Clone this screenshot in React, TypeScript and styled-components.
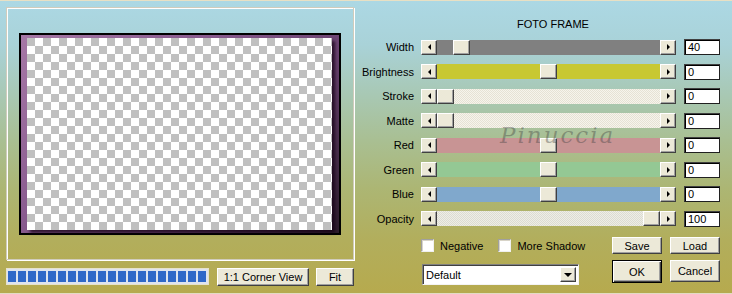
import React from 'react';
import styled, { createGlobalStyle } from 'styled-components';

const GlobalStyle = createGlobalStyle`
  html, body {
    margin: 0;
    padding: 0;
    background: #b6aa4e;
  }
  body {
    font-family: "Liberation Sans", Arial, sans-serif;
    font-size: 11px;
    color: #000;
  }
`;

const Window = styled.div`
  width: 732px;
  height: 294px;
  box-sizing: border-box;
  border-top: 1px solid #e8e0c4;
  border-bottom: 1px solid #e2dcc4;
  background: linear-gradient(
    #acd8e4 0%,
    #a9d2d8 15%,
    #a8c8b4 32%,
    #a9bf92 48%,
    #acb674 64%,
    #b2ae5c 82%,
    #b6aa4e 100%
  );
  display: grid;
  grid-template-columns: 360px 1fr;
  overflow: hidden;
`;

/* ---------- left side: preview ---------- */

const LeftCol = styled.div`
  padding: 6px 0 0 6px;
`;

const GroupBox = styled.div`
  width: 348px;
  height: 253px;
  box-sizing: border-box;
  border: 1px solid #d0ccbc;
  box-shadow: inset 1px 1px 0 #ffffff, 1px 1px 0 #ffffff;
  padding: 25px 0 0 12px;
`;

const FrameBox = styled.div`
  width: 322px;
  height: 202px;
  box-sizing: border-box;
  border: 2px solid #000;
  background: linear-gradient(135deg, #a678a6 0%, #8a5c90 35%, #6a4270 65%, #2c1c2c 100%);
  padding: 3px 7px 3px 6px;
`;

const Checker = styled.div`
  width: 100%;
  height: 100%;
  background-color: #fff;
  background-image: repeating-conic-gradient(#fff 0 25%, #c0c0c0 0 50%);
  background-size: 16px 16px;
  box-shadow: 3px 3px 3px rgba(20, 0, 20, 0.75);
`;

const BottomBar = styled.div`
  display: flex;
  align-items: flex-start;
  margin-top: 8px;
`;

const Progress = styled.div`
  width: 203px;
  height: 17px;
  box-sizing: border-box;
  border: 1px solid #e6e2cc;
  background: #dfe4ee;
  padding: 2px 1px;
  display: flex;
  gap: 2px;
`;

const Block = styled.div`
  width: 8px;
  height: 100%;
  background: #2f68c8;
`;

const ClassicButton = styled.button<{ $w: number; $h: number; $default?: boolean }>`
  width: ${p => p.$w}px;
  height: ${p => p.$h}px;
  box-sizing: border-box;
  padding: 0;
  margin: 0;
  font-family: "Liberation Sans", Arial, sans-serif;
  font-size: 11px;
  color: #000;
  background: #ece9d8;
  border: 1px solid;
  border-color: ${p => (p.$default ? '#000' : '#fff #404040 #404040 #fff')};
  box-shadow: ${p =>
    p.$default
      ? 'inset 1px 1px 0 #fff, inset -1px -1px 0 #404040, inset -2px -2px 0 #a0a0a0'
      : 'inset -1px -1px 0 #a0a0a0'};
  cursor: default;
`;

/* ---------- right side: controls ---------- */

const RightCol = styled.div`
  position: relative;
  padding-top: 16px;
`;

const Title = styled.div`
  line-height: 14px;
  text-align: center;
  padding-left: 14px;
  width: 358px;
`;

const Rows = styled.div`
  margin-top: 4px;
`;

const Row = styled.div`
  height: 24.5px;
  display: flex;
  align-items: center;
`;

const Label = styled.div`
  width: 54px;
  text-align: right;
`;

const Slider = styled.div`
  width: 255px;
  height: 15px;
  margin-left: 7px;
  display: flex;
`;

const ArrowBtn = styled.div<{ $dir: 'left' | 'right' }>`
  width: 16px;
  height: 15px;
  box-sizing: border-box;
  background: #ece9d8;
  border: 1px solid;
  border-color: #fff #404040 #404040 #fff;
  box-shadow: inset -1px -1px 0 #a0a0a0;
  display: flex;
  align-items: center;
  justify-content: center;
  &::after {
    content: '';
    width: 0;
    height: 0;
    border-top: 3px solid transparent;
    border-bottom: 3px solid transparent;
    ${p => (p.$dir === 'left' ? 'border-right: 3px solid #000;' : 'border-left: 3px solid #000;')}
  }
`;

const Track = styled.div<{ $bg: string }>`
  flex: 1;
  position: relative;
  background: ${p => p.$bg};
`;

const Thumb = styled.div`
  position: absolute;
  top: 0;
  width: 17px;
  height: 15px;
  box-sizing: border-box;
  background: #ece9d8;
  border: 1px solid;
  border-color: #fff #404040 #404040 #fff;
  box-shadow: inset -1px -1px 0 #a0a0a0;
`;

const ValueBox = styled.div`
  width: 36px;
  height: 16px;
  margin-left: 8px;
  box-sizing: border-box;
  background: #fff;
  border: 1px solid;
  border-color: #404040 #202020 #202020 #404040;
  box-shadow: inset 1px 1px 0 #000;
  padding-left: 3px;
  line-height: 14px;
`;

const Lower = styled.div`
  padding-left: 61px;
  width: 299px;
`;

const CheckRow = styled.div`
  display: flex;
  align-items: center;
  height: 17px;
  margin-top: 6px;
`;

const CheckBox = styled.div`
  width: 13px;
  height: 13px;
  box-sizing: border-box;
  background: #fff;
  border: 1px solid;
  border-color: #a0a0a0 #f0f0f0 #f0f0f0 #a0a0a0;
  box-shadow: inset 1px 1px 0 #d8d4c8;
`;

const CheckLabel = styled.span<{ $gap: number }>`
  margin-left: 6px;
  margin-right: ${p => p.$gap}px;
`;

const ButtonPair = styled.div`
  margin-left: auto;
  display: flex;
  gap: 8px;
`;

const ActionRow = styled.div`
  display: flex;
  align-items: flex-start;
  margin-top: 6px;
`;

const Select = styled.div`
  width: 157px;
  height: 21px;
  margin-top: 4px;
  margin-left: 1px;
  box-sizing: border-box;
  background: #fff;
  border: 1px solid;
  border-color: #808080 #f4f4f4 #f4f4f4 #808080;
  box-shadow: inset 1px 1px 0 #404040;
  display: flex;
  align-items: center;
  padding: 2px 2px 2px 3px;
`;

const SelectText = styled.span`
  flex: 1;
`;

const SelectArrow = styled.div`
  width: 16px;
  height: 15px;
  box-sizing: border-box;
  background: #ece9d8;
  border: 1px solid;
  border-color: #fff #404040 #404040 #fff;
  box-shadow: inset -1px -1px 0 #a0a0a0;
  display: flex;
  align-items: center;
  justify-content: center;
  &::after {
    content: '';
    border-left: 4px solid transparent;
    border-right: 4px solid transparent;
    border-top: 4px solid #000;
  }
`;

// faint signature scribbled over the sliders
const Watermark = styled.div`
  position: absolute;
  left: 140px;
  top: 121px;
  font-family: "DejaVu Serif", serif;
  font-style: italic;
  font-weight: 300;
  font-size: 23px;
  letter-spacing: 2px;
  color: rgba(60, 60, 60, 0.38);
  pointer-events: none;
`;

const dither = (a: string, b: string) =>
  `repeating-conic-gradient(${a} 0 25%, ${b} 0 50%) 0 0 / 2px 2px`;

type SliderDef = { label: string; bg: string; pos: number; value: string };

const sliders: SliderDef[] = [
  { label: 'Width', bg: '#808080', pos: 0.078, value: '40' },
  { label: 'Brightness', bg: '#c8c832', pos: 0.5, value: '0' },
  { label: 'Stroke', bg: dither('#f6f4ec', '#e6e2d4'), pos: 0, value: '0' },
  { label: 'Matte', bg: dither('#f6f4ec', '#e6e2d4'), pos: 0, value: '0' },
  { label: 'Red', bg: '#c89494', pos: 0.5, value: '0' },
  { label: 'Green', bg: '#94c894', pos: 0.5, value: '0' },
  { label: 'Blue', bg: '#80a8cc', pos: 0.5, value: '0' },
  { label: 'Opacity', bg: dither('#eeeee6', '#dcdcd2'), pos: 1, value: '100' },
];

function App() {
  return (
    <>
      <GlobalStyle />
      <Window>
        <LeftCol>
          <GroupBox>
            <FrameBox>
              <Checker />
            </FrameBox>
          </GroupBox>
          <BottomBar>
            <Progress>
              {Array.from({ length: 20 }).map((_, i) => (
                <Block key={i} />
              ))}
            </Progress>
            <ClassicButton $w={92} $h={18} style={{ marginLeft: 8 }}>1:1 Corner View</ClassicButton>
            <ClassicButton $w={38} $h={18} style={{ marginLeft: 7 }}>Fit</ClassicButton>
          </BottomBar>
        </LeftCol>

        <RightCol>
          <Title>FOTO FRAME</Title>
          <Rows>
            {sliders.map(s => (
              <Row key={s.label}>
                <Label>{s.label}</Label>
                <Slider>
                  <ArrowBtn $dir="left" />
                  <Track $bg={s.bg}>
                    <Thumb style={{ left: `${Math.round(s.pos * (223 - 17))}px` }} />
                  </Track>
                  <ArrowBtn $dir="right" />
                </Slider>
                <ValueBox>{s.value}</ValueBox>
              </Row>
            ))}
          </Rows>
          <Lower>
            <CheckRow>
              <CheckBox />
              <CheckLabel $gap={15}>Negative</CheckLabel>
              <CheckBox />
              <CheckLabel $gap={0}>More Shadow</CheckLabel>
              <ButtonPair>
                <ClassicButton $w={50} $h={17}>Save</ClassicButton>
                <ClassicButton $w={50} $h={17}>Load</ClassicButton>
              </ButtonPair>
            </CheckRow>
            <ActionRow>
              <Select>
                <SelectText>Default</SelectText>
                <SelectArrow />
              </Select>
              <ButtonPair>
                <ClassicButton $w={50} $h={23} $default>OK</ClassicButton>
                <ClassicButton $w={50} $h={22}>Cancel</ClassicButton>
              </ButtonPair>
            </ActionRow>
          </Lower>
          <Watermark>Pinuccia</Watermark>
        </RightCol>
      </Window>
    </>
  );
}

export default React.memo(App);
